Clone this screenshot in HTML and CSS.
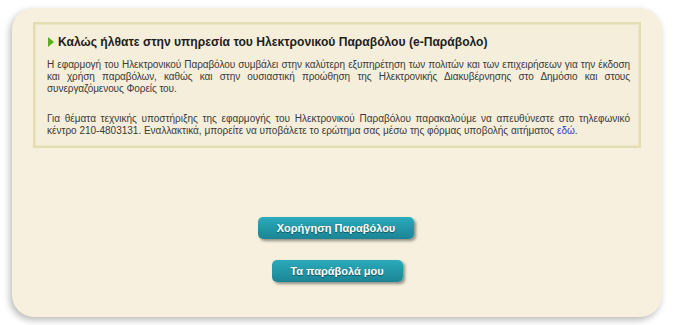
FILE: index.html
```html
<!DOCTYPE html>
<html lang="el">
<head>
<meta charset="utf-8">
<title>e-Παράβολο</title>
<link rel="stylesheet" href="styles.css">
</head>
<body>
<div class="card">
  <div class="welcome">
    <h1 class="title"><span class="arrow"></span>Καλώς ήλθατε στην υπηρεσία του Ηλεκτρονικού Παραβόλου (e-Παράβολο)</h1>
    <p class="text">Η εφαρμογή του Ηλεκτρονικού Παραβόλου συμβάλει στην καλύτερη εξυπηρέτηση των πολιτών και των επιχειρήσεων για την έκδοση και χρήση παραβόλων, καθώς και στην ουσιαστική προώθηση της Ηλεκτρονικής Διακυβέρνησης στο Δημόσιο και στους συνεργαζόμενους Φορείς του.</p>
    <p class="text text-contact">Για θέματα τεχνικής υποστήριξης της εφαρμογής του Ηλεκτρονικού Παραβόλου παρακαλούμε να απευθύνεστε στο τηλεφωνικό κέντρο 210-4803131. Εναλλακτικά, μπορείτε να υποβάλετε το ερώτημα σας μέσω της φόρμας υποβολής αιτήματος <a class="link" href="#">εδώ</a>.</p>
  </div>
  <div class="actions">
    <a class="btn btn-wide" href="#">Χορήγηση Παραβόλου</a>
    <a class="btn btn-narrow" href="#">Τα παράβολά μου</a>
  </div>
</div>
</body>
</html>
```

FILE: styles.css
```css
html, body {
  margin: 0;
  background: #ffffff;
}
body {
  padding: 8px 16px 8px 12px;
  font-family: "Liberation Sans", Arial, sans-serif;
}
.card {
  box-sizing: border-box;
  width: 650px;
  height: 309px;
  background: #f7f0de;
  border-radius: 22px;
  box-shadow: -2px 3px 7px rgba(0, 0, 0, 0.28);
  padding: 14px 21px 0 21px;
}
.welcome {
  box-sizing: border-box;
  height: 126px;
  background: #f5eedb;
  border: 2px solid #e4ddb2;
  outline: 1px solid #ece6c4;
  outline-offset: -3px;
  padding: 10px 9px 8px 12px;
}
.title {
  margin: 0 0 9px 0;
  font-size: 12.1px;
  line-height: 16px;
  font-weight: bold;
  color: #1e1e1e;
  display: flex;
  align-items: center;
}
.arrow {
  width: 0;
  height: 0;
  border-left: 6px solid #58b01c;
  border-top: 5px solid transparent;
  border-bottom: 5px solid transparent;
  margin-right: 4px;
  margin-left: 1px;
}
.text {
  margin: 0 0 18px 0;
  font-size: 10px;
  letter-spacing: -0.08px;
  line-height: 12px;
  color: #3a3a3a;
  text-align: justify;
}
.text-contact {
  letter-spacing: 0;
}
.text:last-child {
  margin-bottom: 0;
}
.link {
  color: #3838c8;
  text-decoration: none;
}
.actions {
  display: flex;
  flex-direction: column;
  align-items: center;
  gap: 21px;
  margin-top: 69px;
}
.btn {
  box-sizing: border-box;
  height: 22px;
  line-height: 22px;
  border-radius: 5px;
  background: linear-gradient(#2aabbb, #1b8494);
  color: #ffffff;
  font-size: 11px;
  font-weight: bold;
  text-align: center;
  text-decoration: none;
  text-shadow: 0 1px 1px rgba(0, 40, 50, 0.6);
  box-shadow: 2px 2px 3px rgba(60, 60, 60, 0.55);
}
.btn-wide {
  width: 156px;
  margin-left: -2px;
}
.btn-narrow {
  width: 131px;
}
```
